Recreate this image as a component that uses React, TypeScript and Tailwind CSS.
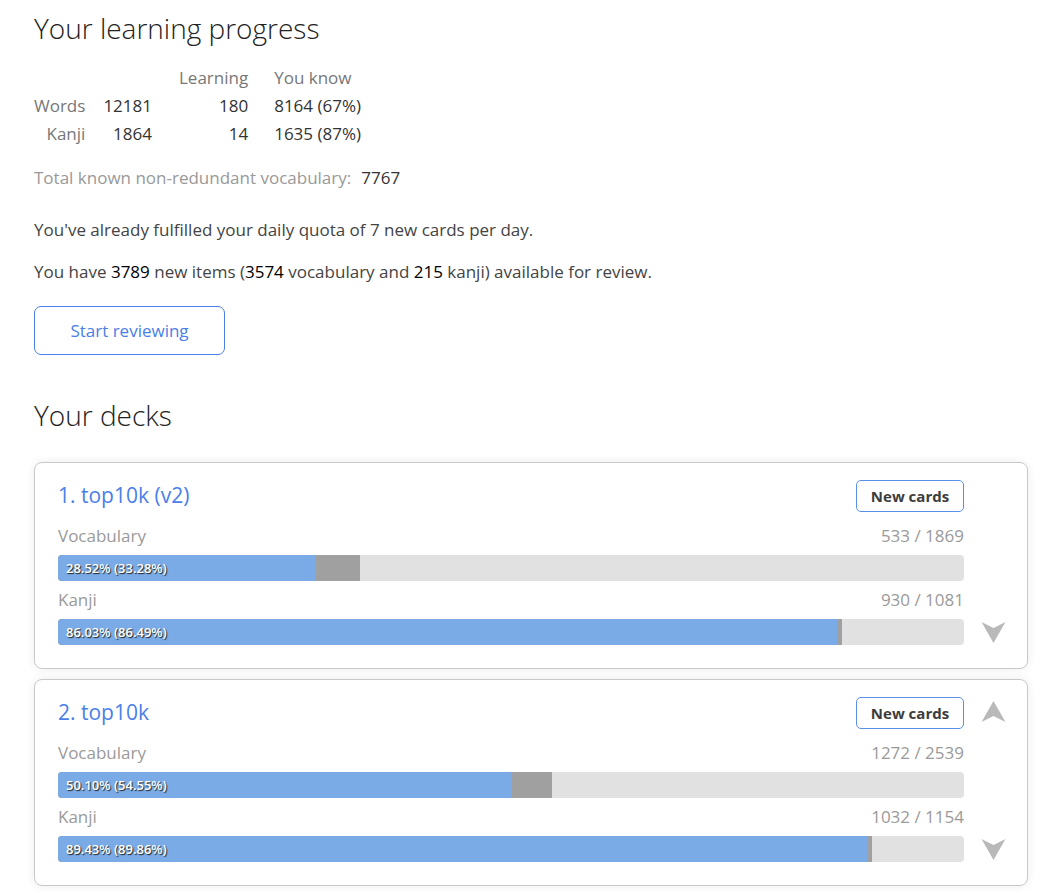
import React from "react";

type Bar = { label: string; count: string; known: number; learning: number; text: string };
type Deck = { title: string; up: boolean; bars: Bar[] };

const decks: Deck[] = [
  {
    title: "1. top10k (v2)",
    up: false,
    bars: [
      { label: "Vocabulary", count: "533 / 1869", known: 28.52, learning: 33.28, text: "28.52% (33.28%)" },
      { label: "Kanji", count: "930 / 1081", known: 86.03, learning: 86.49, text: "86.03% (86.49%)" },
    ],
  },
  {
    title: "2. top10k",
    up: true,
    bars: [
      { label: "Vocabulary", count: "1272 / 2539", known: 50.1, learning: 54.55, text: "50.10% (54.55%)" },
      { label: "Kanji", count: "1032 / 1154", known: 89.43, learning: 89.86, text: "89.43% (89.86%)" },
    ],
  },
];

function Arrow({ up }: { up?: boolean }) {
  return (
    <svg width="25" height="21" viewBox="0 0 24 21" className={up ? "rotate-180" : ""}>
      <path d="M0 0 L12 21 L24 0 L12 6 Z" fill="#b9b9b9" />
    </svg>
  );
}

function ProgressBar({ bar }: { bar: Bar }) {
  return (
    <div>
      <div className="flex justify-between text-[17px] leading-6 text-[#9a9a9a] mt-[7px] mb-[7px]">
        <span>{bar.label}</span>
        <span>{bar.count}</span>
      </div>
      <div className="relative h-[26px] rounded-[4px] bg-[#e1e1e1] overflow-hidden">
        <div className="absolute inset-y-0 left-0 bg-[#a0a0a0]" style={{ width: `${bar.learning}%` }} />
        <div className="absolute inset-y-0 left-0 bg-[#7aabe6]" style={{ width: `${bar.known}%` }} />
        <span className="absolute left-[8px] top-0 leading-[26px] text-[13px] font-semibold text-white [text-shadow:1px_1px_1px_#222]">
          {bar.text}
        </span>
      </div>
    </div>
  );
}

function DeckCard({ deck }: { deck: Deck }) {
  return (
    <div className="flex rounded-[8px] border border-[#c9c9c9] bg-white shadow-[0_0_10px_rgba(0,0,0,0.08)]">
      <div className="flex-1 pl-[23px] pt-[17px] pb-[23px]">
        <div className="flex items-center justify-between">
          <span className="text-[21px] text-[#4a80e8]">{deck.title}</span>
          <button className="h-[32px] w-[108px] rounded-[5px] border border-[#5b8fe8] text-[15px] font-bold text-[#3d3d3d]">
            New cards
          </button>
        </div>
        <div className="mt-[12px]">
          <ProgressBar bar={deck.bars[0]} />
          <div className="mt-[4px]">
            <ProgressBar bar={deck.bars[1]} />
          </div>
        </div>
      </div>
      <div className="w-[63px] flex flex-col items-center justify-between pt-[21px] pb-[25px] pr-[4px]">
        {deck.up ? <Arrow up /> : <span />}
        <Arrow />
      </div>
    </div>
  );
}

export default function App() {
  return (
    <div className="min-h-screen bg-white px-[34px] pt-[8px] text-[#444] font-['Open_Sans',_sans-serif]">
      <h1 className="text-[28px] leading-[40px] font-light text-[#222]">Your learning progress</h1>

      {/* Stats table */}
      <table className="mt-[16px] text-[17px] border-collapse">
        <thead>
          <tr className="h-[28px] text-[#777]">
            <th />
            <th />
            <th className="font-normal text-right pl-[27px]">Learning</th>
            <th className="font-normal text-left pl-[26px]">You know</th>
          </tr>
        </thead>
        <tbody>
          <tr className="h-[28px]">
            <td className="text-right text-[#777]">Words</td>
            <td className="text-right text-[#333] pl-[18px]">12181</td>
            <td className="text-right text-[#333]">180</td>
            <td className="text-left text-[#333] pl-[26px]">8164 (67%)</td>
          </tr>
          <tr className="h-[28px]">
            <td className="text-right text-[#777]">Kanji</td>
            <td className="text-right text-[#333] pl-[18px]">1864</td>
            <td className="text-right text-[#333]">14</td>
            <td className="text-left text-[#333] pl-[26px]">1635 (87%)</td>
          </tr>
        </tbody>
      </table>

      <p className="mt-[18px] text-[17px] leading-6">
        <span className="text-[#999]">Total known non-redundant vocabulary:</span>
        <span className="ml-[10px] text-[#333]">7767</span>
      </p>

      <p className="mt-[28px] text-[17px] leading-6">You've already fulfilled your daily quota of 7 new cards per day.</p>
      <p className="mt-[18px] text-[17px] leading-6">
        You have <span className="text-black">3789</span> new items (<span className="text-black">3574</span> vocabulary
        and <span className="text-black">215</span> kanji) available for review.
      </p>

      <button className="mt-[22px] w-[191px] h-[49px] rounded-[7px] border border-[#4a80e8] text-[17px] text-[#4a80e8]">
        Start reviewing
      </button>

      <h2 className="mt-[40px] text-[28px] leading-[40px] font-light text-[#222]">Your decks</h2>

      <div className="mt-[27px] w-[994px] flex flex-col gap-[10px]">
        {decks.map((d) => (
          <DeckCard key={d.title} deck={d} />
        ))}
      </div>
    </div>
  );
}
